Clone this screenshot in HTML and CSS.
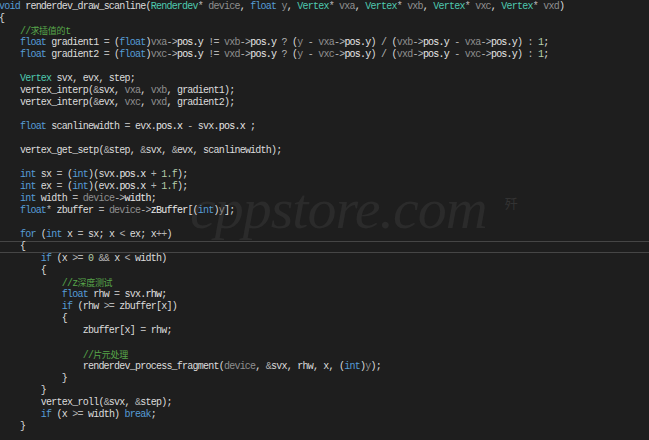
FILE: index.html
```html
<!DOCTYPE html>
<html lang="zh-CN">

<head>
  <meta charset="UTF-8">
  <title>renderdev_draw_scanline</title>
  <link rel="stylesheet" href="styles.css">
</head>

<body>

  <div id="editor">
    <div class="watermark">cppstore.com<span class="mark">歼</span></div>

    <div class="code">
<div class="ln"><span class="k">void</span> renderdev_draw_scanline(<span class="t">Renderdev</span><span class="o">*</span> <span class="p">device</span>, <span class="k">float</span> <span class="p">y</span>, <span class="t">Vertex</span><span class="o">*</span> <span class="p">vxa</span>, <span class="t">Vertex</span><span class="o">*</span> <span class="p">vxb</span>, <span class="t">Vertex</span><span class="o">*</span> <span class="p">vxc</span>, <span class="t">Vertex</span><span class="o">*</span> <span class="p">vxd</span>)</div>
<div class="ln">{</div>
<div class="ln">    <span class="c">//<span class="cjk">求插值的</span>t</span></div>
<div class="ln">    <span class="k">float</span> gradient1 <span class="o">=</span> (<span class="k">float</span>)<span class="p">vxa</span><span class="o">-&gt;</span><span class="f">pos.y</span> <span class="o">!=</span> <span class="p">vxb</span><span class="o">-&gt;</span><span class="f">pos.y</span> <span class="o">?</span> (<span class="p">y</span> <span class="o">-</span> <span class="p">vxa</span><span class="o">-&gt;</span><span class="f">pos.y</span>) <span class="o">/</span> (<span class="p">vxb</span><span class="o">-&gt;</span><span class="f">pos.y</span> <span class="o">-</span> <span class="p">vxa</span><span class="o">-&gt;</span><span class="f">pos.y</span>) <span class="o">:</span> <span class="n">1</span>;</div>
<div class="ln">    <span class="k">float</span> gradient2 <span class="o">=</span> (<span class="k">float</span>)<span class="p">vxc</span><span class="o">-&gt;</span><span class="f">pos.y</span> <span class="o">!=</span> <span class="p">vxd</span><span class="o">-&gt;</span><span class="f">pos.y</span> <span class="o">?</span> (<span class="p">y</span> <span class="o">-</span> <span class="p">vxc</span><span class="o">-&gt;</span><span class="f">pos.y</span>) <span class="o">/</span> (<span class="p">vxd</span><span class="o">-&gt;</span><span class="f">pos.y</span> <span class="o">-</span> <span class="p">vxc</span><span class="o">-&gt;</span><span class="f">pos.y</span>) <span class="o">:</span> <span class="n">1</span>;</div>
<div class="ln"> </div>
<div class="ln">    <span class="t">Vertex</span> svx, evx, step;</div>
<div class="ln">    vertex_interp(<span class="o">&amp;</span>svx, <span class="p">vxa</span>, <span class="p">vxb</span>, gradient1);</div>
<div class="ln">    vertex_interp(<span class="o">&amp;</span>evx, <span class="p">vxc</span>, <span class="p">vxd</span>, gradient2);</div>
<div class="ln"> </div>
<div class="ln">    <span class="k">float</span> scanlinewidth <span class="o">=</span> evx.<span class="f">pos.x</span> <span class="o">-</span> svx.<span class="f">pos.x</span> ;</div>
<div class="ln"> </div>
<div class="ln">    vertex_get_setp(<span class="o">&amp;</span>step, <span class="o">&amp;</span>svx, <span class="o">&amp;</span>evx, scanlinewidth);</div>
<div class="ln"> </div>
<div class="ln">    <span class="k">int</span> sx <span class="o">=</span> (<span class="k">int</span>)(svx.<span class="f">pos.x</span> <span class="o">+</span> <span class="n">1.f</span>);</div>
<div class="ln">    <span class="k">int</span> ex <span class="o">=</span> (<span class="k">int</span>)(evx.<span class="f">pos.x</span> <span class="o">+</span> <span class="n">1.f</span>);</div>
<div class="ln">    <span class="k">int</span> width <span class="o">=</span> <span class="p">device</span><span class="o">-&gt;</span><span class="f">width</span>;</div>
<div class="ln">    <span class="k">float</span><span class="o">*</span> zbuffer <span class="o">=</span> <span class="p">device</span><span class="o">-&gt;</span><span class="f">zBuffer</span>[(<span class="k">int</span>)<span class="p">y</span>];</div>
<div class="ln"> </div>
<div class="ln">    <span class="k">for</span> (<span class="k">int</span> x <span class="o">=</span> sx; x <span class="o">&lt;</span> ex; x<span class="o">++</span>)</div>
<div class="ln cur">    {</div>
<div class="ln">        <span class="k">if</span> (x <span class="o">&gt;=</span> <span class="n">0</span> <span class="o">&amp;&amp;</span> x <span class="o">&lt;</span> width)</div>
<div class="ln">        {</div>
<div class="ln">            <span class="c">//z<span class="cjk">深度测试</span></span></div>
<div class="ln">            <span class="k">float</span> rhw <span class="o">=</span> svx.<span class="f">rhw</span>;</div>
<div class="ln">            <span class="k">if</span> (rhw <span class="o">&gt;=</span> zbuffer[x])</div>
<div class="ln">            {</div>
<div class="ln">                zbuffer[x] <span class="o">=</span> rhw;</div>
<div class="ln"> </div>
<div class="ln">                <span class="c">//<span class="cjk">片元处理</span></span></div>
<div class="ln">                renderdev_process_fragment(<span class="p">device</span>, <span class="o">&amp;</span>svx, rhw, x, (<span class="k">int</span>)<span class="p">y</span>);</div>
<div class="ln">            }</div>
<div class="ln">        }</div>
<div class="ln">        vertex_roll(<span class="o">&amp;</span>svx, <span class="o">&amp;</span>step);</div>
<div class="ln">        <span class="k">if</span> (x <span class="o">&gt;=</span> width) <span class="k">break</span>;</div>
<div class="ln">    }</div>
    </div>
  </div>

</body>

</html>
```

FILE: styles.css
```css
html,
body {
  margin: 0;
  height: 100%;
  background-color: #1e1e1e;
  overflow: hidden;
}

#editor {
  position: relative;
  height: 100%;
}

.code {
  position: relative;
  padding-top: 1px;
  margin-left: -1px;
  font-family: 'Liberation Mono', 'Noto Sans CJK SC', monospace;
  font-size: 10px;
  letter-spacing: -0.77px;
  color: #dcdcdc;
}

.ln {
  height: 12px;
  line-height: 12px;
  white-space: pre;
}

/* current line box */
.ln.cur {
  box-shadow: inset 0 1px #464646, inset 0 -1px #464646;
}

.k {
  color: #569cd6;
}

.t {
  color: #4ec9b0;
}

.p {
  color: #8f8f8f;
}

.o {
  color: #b4b4b4;
}

.f {
  color: #e8e8e8;
}

.n {
  color: #b5cea8;
}

.c {
  color: #57a64a;
}

.cjk {
  font-family: 'Noto Sans CJK SC', sans-serif;
  font-size: 9px;
  letter-spacing: -0.3px;
}

/* faint watermark behind the code */
.watermark {
  position: absolute;
  left: 190px;
  top: 180px;
  font-family: 'Liberation Serif', serif;
  font-style: italic;
  font-size: 58px;
  line-height: 58px;
  letter-spacing: -1px;
  color: #2b2b2b;
  white-space: nowrap;
  pointer-events: none;
}

.watermark .mark {
  display: inline-block;
  vertical-align: 20px;
  margin-left: 18px;
  font-family: 'Noto Sans CJK SC', sans-serif;
  font-style: normal;
  font-size: 13px;
  line-height: 13px;
  color: #333;
}
```
